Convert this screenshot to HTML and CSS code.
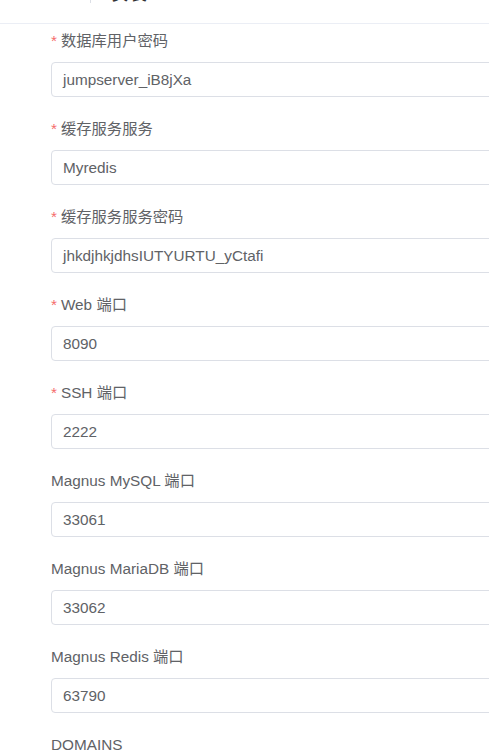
FILE: index.html
```html
<!DOCTYPE html>
<html lang="zh-CN">
<head>
<meta charset="utf-8">
<title>安装</title>
<link rel="stylesheet" href="styles.css">
</head>
<body>
<div class="page-header">
  <div class="header-left"></div>
  <div class="divider"></div>
  <div class="header-title">安装</div>
</div>
<form class="form">
  <div class="form-item">
    <label class="label required">数据库用户密码</label>
    <div class="input"><span>jumpserver_iB8jXa</span></div>
  </div>
  <div class="form-item">
    <label class="label required">缓存服务服务</label>
    <div class="input"><span>Myredis</span></div>
  </div>
  <div class="form-item">
    <label class="label required">缓存服务服务密码</label>
    <div class="input"><span>jhkdjhkjdhsIUTYURTU_yCtafi</span></div>
  </div>
  <div class="form-item">
    <label class="label required">Web 端口</label>
    <div class="input"><span>8090</span></div>
  </div>
  <div class="form-item">
    <label class="label required">SSH 端口</label>
    <div class="input"><span>2222</span></div>
  </div>
  <div class="form-item">
    <label class="label">Magnus MySQL 端口</label>
    <div class="input"><span>33061</span></div>
  </div>
  <div class="form-item">
    <label class="label">Magnus MariaDB 端口</label>
    <div class="input"><span>33062</span></div>
  </div>
  <div class="form-item">
    <label class="label">Magnus Redis 端口</label>
    <div class="input"><span>63790</span></div>
  </div>
  <div class="form-item">
    <label class="label">DOMAINS</label>
  </div>
</form>
</body>
</html>
```
FILE: styles.css
```css
html, body {
  margin: 0;
  padding: 0;
  background: #ffffff;
  overflow: hidden;
}
body {
  font-family: "Liberation Sans", Arial, "Noto Sans CJK SC", sans-serif;
  font-size: 15.3px;
  color: #606266;
  width: 489px;
  height: 753px;
}
.page-header {
  margin-top: -33px;
  height: 57px;
  box-sizing: border-box;
  padding: 16px 0;
  display: flex;
  align-items: center;
  border-bottom: 1px solid #ebeef5;
}
.header-left {
  width: 90px;
}
.divider {
  width: 1px;
  height: 16px;
  background: #dcdfe6;
  margin-right: 20px;
}
.header-title {
  font-size: 18px;
  line-height: 24px;
  color: #303133;
  margin-bottom: 2px;
}
.form {
  padding: 6px 0 0 51px;
}
.form-item {
  margin-bottom: 21px;
}
.label {
  display: block;
  line-height: 22px;
  height: 22px;
  margin-bottom: 10px;
  color: #606266;
}
.label.required::before {
  content: "*";
  color: #f56c6c;
  margin-right: 4px;
}
.input {
  width: 600px;
  height: 35px;
  box-sizing: border-box;
  border: 1px solid #dcdfe6;
  border-radius: 4px;
  padding: 0 11px;
  display: flex;
  align-items: center;
  color: #606266;
}
```
